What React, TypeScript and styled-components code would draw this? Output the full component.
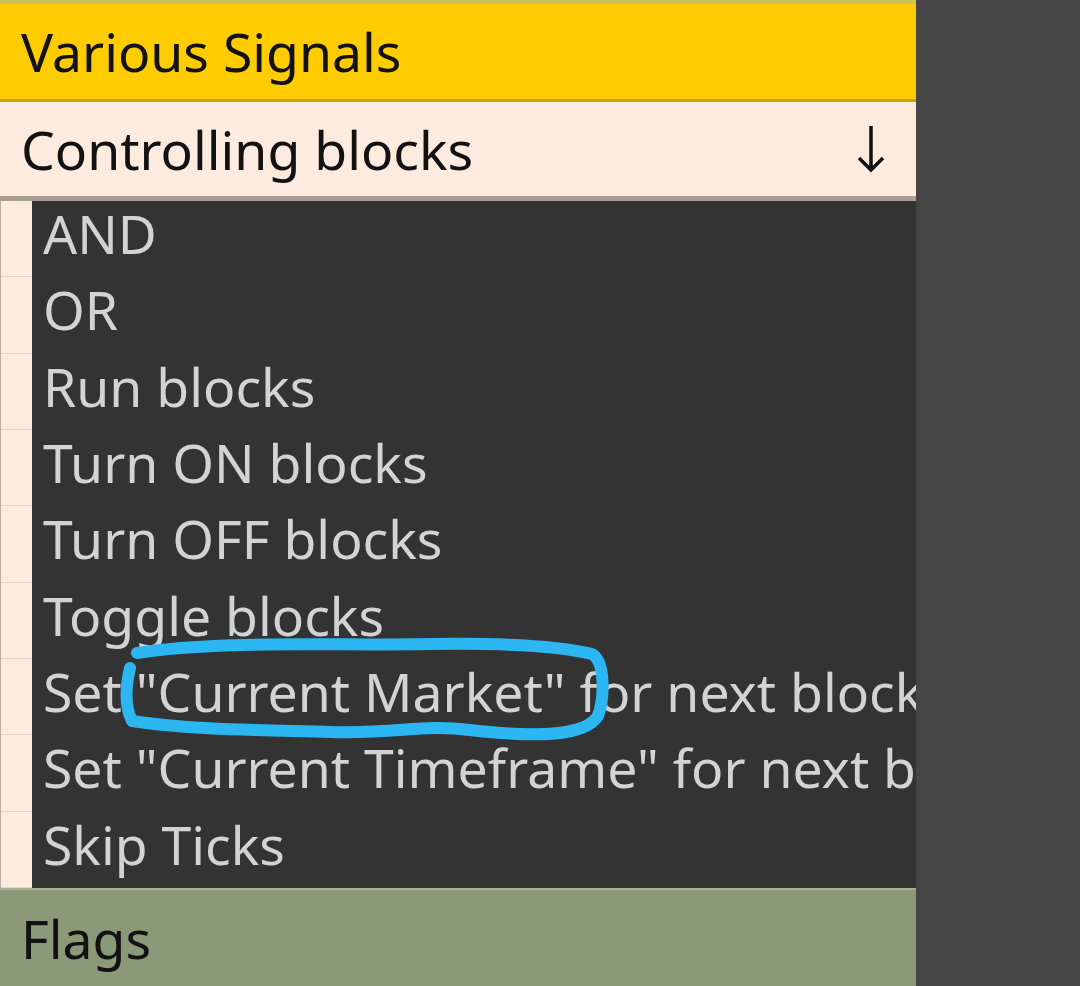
import styled, { createGlobalStyle } from 'styled-components';

const Global = createGlobalStyle`
    html, body { margin: 0; padding: 0; background: #454545; }
    body { font-family: "Noto Sans", "Open Sans", sans-serif; }
`

const Screen = styled.div`
    width: 1080px;
    height: 986px;
    display: flex;
    background: #454545;
    overflow: hidden;
`

const Panel = styled.div`
    width: 916px;
    height: 100%;
    display: flex;
    flex-direction: column;
    position: relative;
`

const TopHeader = styled.div`
    height: 95px;
    border-top: 4px solid #c9c353;
    border-bottom: 3px solid #c9a200;
    background: #ffcc00;
    display: flex;
    align-items: center;
    padding-left: 21px;
    font-size: 53.5px;
    color: #121212;
`

const SectionHeader = styled.div`
    height: 94px;
    background: #feebdf;
    border-bottom: 5px solid #a99d94;
    display: flex;
    align-items: center;
    justify-content: space-between;
    padding: 0 28px 0 21px;
    font-size: 53.5px;
    color: #121212;
`

const ListArea = styled.div`
    flex: 1;
    display: flex;
    min-height: 0;
`

const Strip = styled.div`
    width: 31px;
    background: #feebdf;
    border-left: 1px solid #b9aca3;
    display: flex;
    flex-direction: column;
`

const StripCell = styled.div`
    height: 76.4px;
    border-bottom: 1px solid #e3d3c9;
    box-sizing: border-box;
`

const List = styled.div`
    flex: 1;
    background: #333333;
    display: flex;
    flex-direction: column;
    overflow: hidden;
`

const Item = styled.div`
    height: 76.4px;
    box-sizing: border-box;
    display: flex;
    align-items: center;
    padding: 0 0 10px 11px;
    font-size: 53.5px;
    line-height: 62px;
    color: #d3d3d3;
    white-space: nowrap;
`

const Footer = styled.div`
    height: 96px;
    border-top: 2px solid #a6b196;
    background: #8a9a78;
    display: flex;
    align-items: center;
    padding-left: 21px;
    font-size: 53.5px;
    color: #121212;
`

const Scribble = styled.svg`
    position: absolute;
    left: 0;
    top: 0;
    pointer-events: none;
`

const DownArrow = () => (
    <svg width="34" height="52" viewBox="0 0 34 52">
        <path d="M17 3 V47 M5 35 L17 47 L29 35" stroke="#111" strokeWidth="3.5" fill="none" />
    </svg>
)

const items = [
    'AND',
    'OR',
    'Run blocks',
    'Turn ON blocks',
    'Turn OFF blocks',
    'Toggle blocks',
    'Set "Current Market" for next block',
    'Set "Current Timeframe" for next block',
    'Skip Ticks',
]

const App = () => {
    return (
        <>
            <Global />
            <Screen>
                <Panel>
                    <TopHeader>Various Signals</TopHeader>
                    <SectionHeader>
                        <span>Controlling blocks</span>
                        <DownArrow />
                    </SectionHeader>
                    <ListArea>
                        <Strip>
                            {items.map((_, i) => <StripCell key={i} />)}
                        </Strip>
                        <List>
                            {items.map((txt, i) => <Item key={i}>{txt}</Item>)}
                        </List>
                    </ListArea>
                    <Footer>Flags</Footer>
                    <Scribble width="916" height="986" viewBox="0 0 916 986">
                        <path
                            d="M137 653 C220 640 330 646 430 644 C500 643 560 646 592 654 C606 662 604 700 598 716 C585 736 540 738 470 730 C420 724 400 734 330 732 C260 730 190 730 132 721 C124 705 126 685 130 668"
                            stroke="#2db7f2"
                            strokeWidth="12"
                            strokeLinecap="round"
                            strokeLinejoin="round"
                            fill="none"
                        />
                    </Scribble>
                </Panel>
            </Screen>
        </>
    )
}

export default App
